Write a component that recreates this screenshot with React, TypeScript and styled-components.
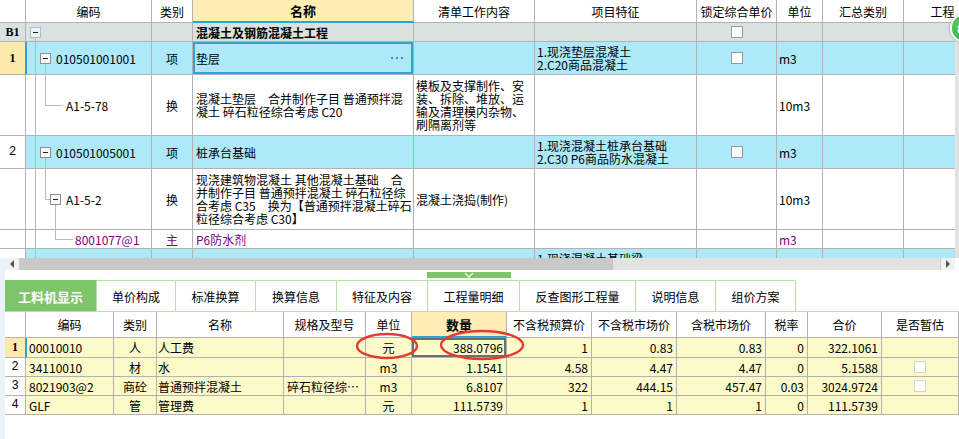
import React from "react";
import styled, { createGlobalStyle } from "styled-components";

const GlobalStyle = createGlobalStyle`
  html, body, #root { margin: 0; padding: 0; }
  body {
    width: 959px;
    height: 439px;
    overflow: hidden;
    background: #fff;
    font-family: "Noto Sans CJK SC", "Liberation Sans", sans-serif;
    font-size: 12px;
    color: #000;
  }
  * { box-sizing: border-box; }
`;

const LINE = "#b2b2b2";
const BLUE_ROW = "#aee9f9";
const GRAY_ROW = "#d9e2de";
const HEAD_YELLOW = "#feeeb5";
const NUM_YELLOW = "#fce9ab";
const PALE_YELLOW = "#fbfac8";
const GREEN = "#7ec46b";
const LIGHT_GREEN = "#b8e1a6";
const PURPLE = "#800080";
const SEL_BLUE = "#34a0d6";

const TOP_COLS = "26px 126px 41px 221px 121px 162px 80px 46px 81px 90px";
const BOT_COLS = "21px 88px 43px 127px 82px 46px 95px 85px 85px 89px 42px 74px 77px";

type Tree = { lines: number[][]; boxes?: { x: number; y: number; light?: boolean }[] };

type TopRow = {
  h: number;
  bg: string;
  num?: string;
  numBg?: string;
  numBold?: boolean;
  active?: boolean;
  code?: string;
  codeX: number;
  tree: Tree;
  kind?: string;
  name?: string;
  nameBold?: boolean;
  nameSel?: boolean;
  work?: string;
  feature?: string;
  check?: boolean;
  unit?: string;
  color?: string;
};

const TOP_ROWS: TopRow[] = [
  {
    h: 19, bg: GRAY_ROW, num: "B1", numBg: GRAY_ROW, numBold: true, codeX: 0,
    tree: { lines: [[9, 14, 9, 19]], boxes: [{ x: 4, y: 4, light: true }] },
    name: "混凝土及钢筋混凝土工程", nameBold: true, check: true,
  },
  {
    h: 33, bg: BLUE_ROW, num: "1", numBg: NUM_YELLOW, numBold: true, active: true,
    code: "010501001001", codeX: 30,
    tree: { lines: [[9, 0, 9, 33], [19, 21, 19, 33]], boxes: [{ x: 14, y: 11 }] },
    kind: "项", name: "垫层", nameSel: true,
    feature: "1.现浇垫层混凝土\n2.C20商品混凝土", check: true, unit: "m3",
  },
  {
    h: 61, bg: "#fff", code: "A1-5-78", codeX: 40,
    tree: { lines: [[9, 0, 9, 61], [19, 0, 19, 30], [19, 30, 37, 30]] },
    kind: "换", name: "混凝土垫层　合并制作子目 普通预拌混\n凝土 碎石粒径综合考虑 C20",
    work: "模板及支撑制作、安\n装、拆除、堆放、运\n输及清理模内杂物、\n刷隔离剂等", unit: "10m3",
  },
  {
    h: 33, bg: BLUE_ROW, num: "2", numBg: "#fff", code: "010501005001", codeX: 30,
    tree: { lines: [[9, 0, 9, 33], [19, 21, 19, 33]], boxes: [{ x: 14, y: 11 }] },
    kind: "项", name: "桩承台基础",
    feature: "1.现浇混凝土桩承台基础\n2.C30 P6商品防水混凝土", check: true, unit: "m3",
  },
  {
    h: 61, bg: "#fff", code: "A1-5-2", codeX: 40,
    tree: {
      lines: [[9, 0, 9, 61], [19, 0, 19, 30], [19, 30, 24, 30], [29, 35, 29, 61]],
      boxes: [{ x: 24, y: 25 }],
    },
    kind: "换",
    name: "现浇建筑物混凝土 其他混凝土基础　合\n并制作子目 普通预拌混凝土 碎石粒径综\n合考虑 C35　换为【普通预拌混凝土碎石\n粒径综合考虑 C30】",
    work: "混凝土浇捣(制作)", unit: "10m3",
  },
  {
    h: 19, bg: "#fff", code: "8001077@1", codeX: 49, color: PURPLE,
    tree: { lines: [[9, 0, 9, 19], [29, 0, 29, 9], [29, 9, 47, 9]] },
    kind: "主", name: "P6防水剂", unit: "m3",
  },
  {
    h: 33, bg: BLUE_ROW, numBg: "#fff", codeX: 30,
    tree: { lines: [[9, 0, 9, 33]] },
    feature: "1.现浇混凝土基础梁\n2.C30商品混凝土",
  },
];

const TOP_HEAD = ["", "编码", "类别", "名称", "清单工作内容", "项目特征", "锁定综合单价", "单位", "汇总类别", "工程量"];

const BOT_HEAD = ["", "编码", "类别", "名称", "规格及型号", "单位", "数量", "不含税预算价", "不含税市场价", "含税市场价", "税率", "合价", "是否暂估"];

const BOT_ROWS = [
  { n: "1", h: 20, code: "00010010", kind: "人", name: "人工费", spec: "", unit: "元", qty: "388.0796", a: "1", b: "0.83", c: "0.83", r: "0", total: "322.1061", chk: false, active: true },
  { n: "2", h: 19, code: "34110010", kind: "材", name: "水", spec: "", unit: "m3", qty: "1.1541", a: "4.58", b: "4.47", c: "4.47", r: "0", total: "5.1588", chk: true },
  { n: "3", h: 19, code: "8021903@2", kind: "商砼", name: "普通预拌混凝土", spec: "碎石粒径综…", unit: "m3", qty: "6.8107", a: "322", b: "444.15", c: "457.47", r: "0.03", total: "3024.9724", chk: true },
  { n: "4", h: 19, code: "GLF", kind: "管", name: "管理费", spec: "", unit: "元", qty: "111.5739", a: "1", b: "1", c: "1", r: "0", total: "111.5739", chk: false },
];

const TABS = [
  { label: "工料机显示", w: 92 },
  { label: "单价构成", w: 79 },
  { label: "标准换算", w: 80 },
  { label: "换算信息", w: 81 },
  { label: "特征及内容", w: 91 },
  { label: "工程量明细", w: 92 },
  { label: "反查图形工程量", w: 116 },
  { label: "说明信息", w: 80 },
  { label: "组价方案", w: 80 },
];

const TreeSvg = ({ tree, h }: { tree: Tree; h: number }) => (
  <TreeLayer width={126} height={h} shapeRendering="crispEdges">
    {tree.lines.map(([x1, y1, x2, y2], i) =>
      x1 === x2 ? (
        <line key={i} x1={x1 + 0.5} y1={y1} x2={x2 + 0.5} y2={y2} stroke="#b9b9b9" />
      ) : (
        <line key={i} x1={x1} y1={y1 + 0.5} x2={x2} y2={y2 + 0.5} stroke="#b9b9b9" />
      )
    )}
    {tree.boxes?.map((b, i) => (
      <g key={"b" + i}>
        <rect
          x={b.x + 0.5}
          y={b.y + 0.5}
          width={10}
          height={10}
          fill={b.light ? "#e9f3f6" : "#fafafa"}
          stroke={b.light ? "#9fc2d2" : "#8c8c8c"}
        />
        <line x1={b.x + 3} y1={b.y + 5.5} x2={b.x + 8} y2={b.y + 5.5} stroke="#222" />
      </g>
    ))}
  </TreeLayer>
);

const MoreDots = () => (
  <More width={12} height={3}>
    <rect x={0} y={0} width={2} height={2} fill="#3a8fd0" />
    <rect x={5} y={0} width={2} height={2} fill="#3a8fd0" />
    <rect x={10} y={0} width={2} height={2} fill="#3a8fd0" />
  </More>
);

export default function App() {
  return (
    <Page>
      <GlobalStyle />
      <TopArea>
        <GridBox>
          <GridRow $cols={TOP_COLS} $h={23} $bg="#fff">
            {TOP_HEAD.map((t, i) => (
              <HeadCell key={i} $active={i === 3}>
                {t}
              </HeadCell>
            ))}
          </GridRow>
          {TOP_ROWS.map((r, i) => (
            <GridRow key={i} $cols={TOP_COLS} $h={r.h} $bg={r.bg}>
              <NumCell $bg={r.numBg} $bold={r.numBold} $active={r.active}>
                {r.num}
              </NumCell>
              <CodeCell $pl={r.codeX} $active={r.active} $color={r.color}>
                <TreeSvg tree={r.tree} h={r.h} />
                {r.code}
              </CodeCell>
              <Cell $align="center" $color={r.color}>{r.kind}</Cell>
              <Cell $sel={r.nameSel} $bold={r.nameBold} $color={r.color} $pl={3}>
                <span>{r.name}</span>
                {r.nameSel && <MoreDots />}
              </Cell>
              <Cell>{r.work}</Cell>
              <Cell>{r.feature}</Cell>
              <Cell $align="center">{r.check && <Check />}</Cell>
              <Cell $color={r.color}>{r.unit}</Cell>
              <Cell />
              <Cell />
            </GridRow>
          ))}
        </GridBox>
        <VBar />
      </TopArea>

      <Lower>
        <LeftStrip />
        <LowerMain>
          <HScroll>
            <ScrollBtn>
              <svg width="6" height="8"><path d="M5 0 L1 4 L5 8 Z" fill="#555" /></svg>
            </ScrollBtn>
            <Thumb />
            <Track />
            <ScrollBtn $right>
              <svg width="6" height="8"><path d="M1 0 L5 4 L1 8 Z" fill="#555" /></svg>
            </ScrollBtn>
            <Corner />
          </HScroll>

          <Splitter>
            <SplitBar>
              <svg width="10" height="6">
                <path d="M1 1 L5 5 L9 1" stroke="#eaf6e4" strokeWidth="1.5" fill="none" />
              </svg>
            </SplitBar>
          </Splitter>

          <TabBar>
            {TABS.map((t, i) => (
              <Tab key={t.label} $w={t.w} $active={i === 0}>
                {t.label}
              </Tab>
            ))}
          </TabBar>

          <GridRow $cols={BOT_COLS} $h={26} $bg="#fff">
            {BOT_HEAD.map((t, i) => (
              <HeadCell key={i} $active={i === 6}>
                {t}
              </HeadCell>
            ))}
          </GridRow>
          {BOT_ROWS.map((r) => (
            <GridRow key={r.n} $cols={BOT_COLS} $h={r.h} $bg={PALE_YELLOW}>
              <NumCell $bg={r.active ? NUM_YELLOW : "#fff"} $bold={r.active} $active={r.active}>
                {r.n}
              </NumCell>
              <Cell $pl={3} $edge={r.active}>{r.code}</Cell>
              <Cell $align="center">{r.kind}</Cell>
              <Cell $pl={1}>{r.name}</Cell>
              <Cell $pl={3}>{r.spec}</Cell>
              <Cell $align="center">{r.unit}</Cell>
              <Cell $align="right" $frame={r.active}>{r.qty}</Cell>
              <Cell $align="right">{r.a}</Cell>
              <Cell $align="right">{r.b}</Cell>
              <Cell $align="right">{r.c}</Cell>
              <Cell $align="right">{r.r}</Cell>
              <Cell $align="right">{r.total}</Cell>
              <Cell $align="center">{r.chk && <Check $soft />}</Cell>
            </GridRow>
          ))}
        </LowerMain>
      </Lower>

      <Marks width={959} height={439}>
        <ellipse cx={387} cy={346} rx={30} ry={12} fill="none" stroke="#e53a30" strokeWidth={2.4} />
        <ellipse cx={482} cy={345} rx={41} ry={14} fill="none" stroke="#e53a30" strokeWidth={2.4} />
      </Marks>
      <FloatBall>8</FloatBall>
    </Page>
  );
}

const Page = styled.div`
  position: relative;
  width: 959px;
  height: 439px;
  overflow: hidden;
  display: flex;
  flex-direction: column;
`;

const TopArea = styled.div`
  display: flex;
  height: 258px;
  overflow: hidden;
`;

const GridBox = styled.div`
  width: 955px;
  overflow: hidden;
`;

const VBar = styled.div`
  width: 4px;
  margin-top: 23px;
  background: #e2e2e2;
`;

const GridRow = styled.div<{ $cols: string; $h: number; $bg: string }>`
  display: grid;
  grid-template-columns: ${(p) => p.$cols};
  height: ${(p) => p.$h}px;
  flex-shrink: 0;
  background: ${(p) => p.$bg};
`;

const Cell = styled.div<{
  $align?: "center" | "right";
  $color?: string;
  $bold?: boolean;
  $sel?: boolean;
  $pl?: number;
  $frame?: boolean;
  $edge?: boolean;
}>`
  position: relative;
  display: flex;
  align-items: center;
  justify-content: ${(p) =>
    p.$sel ? "space-between" : p.$align === "center" ? "center" : p.$align === "right" ? "flex-end" : "flex-start"};
  padding: 0 ${(p) => (p.$align === "right" ? 3 : 2)}px 0 ${(p) => p.$pl ?? 2}px;
  border-right: 1px solid ${LINE};
  border-bottom: 1px solid ${LINE};
  color: ${(p) => p.$color ?? "#000"};
  font-weight: ${(p) => (p.$bold ? 700 : 400)};
  white-space: pre;
  line-height: 13px;
  overflow: hidden;
  box-shadow: ${(p) =>
    p.$sel
      ? `inset 0 0 0 2px ${SEL_BLUE}`
      : p.$frame
      ? "inset 0 0 0 2px #6e6e6e"
      : p.$edge
      ? `inset 1px 0 0 ${SEL_BLUE}`
      : "none"};
`;

const HeadCell = styled.div<{ $active?: boolean }>`
  display: flex;
  align-items: center;
  justify-content: center;
  white-space: nowrap;
  overflow: hidden;
  border-right: 1px solid ${LINE};
  border-bottom: ${(p) => (p.$active ? `2px solid ${SEL_BLUE}` : `1px solid ${LINE}`)};
  background: ${(p) => (p.$active ? HEAD_YELLOW : "#fff")};
  font-weight: ${(p) => (p.$active ? 700 : 400)};
  font-size: ${(p) => (p.$active ? 13 : 12)}px;
`;

const NumCell = styled.div<{ $bg?: string; $bold?: boolean; $active?: boolean }>`
  display: flex;
  align-items: center;
  justify-content: center;
  background: ${(p) => p.$bg ?? "#fff"};
  border-right: 1px solid ${(p) => (p.$active ? SEL_BLUE : LINE)};
  border-bottom: 1px solid ${LINE};
  font-family: ${(p) => (p.$bold ? '"Liberation Serif", serif' : '"Liberation Mono", monospace')};
  font-weight: ${(p) => (p.$bold ? 700 : 400)};
  font-size: 12px;
`;

const CodeCell = styled.div<{ $pl: number; $active?: boolean; $color?: string }>`
  position: relative;
  display: flex;
  align-items: center;
  padding-left: ${(p) => p.$pl}px;
  border-right: 1px solid ${LINE};
  border-bottom: 1px solid ${LINE};
  color: ${(p) => p.$color ?? "#000"};
  white-space: pre;
  box-shadow: ${(p) => (p.$active ? `inset 1px 0 0 ${SEL_BLUE}` : "none")};
`;

const TreeLayer = styled.svg`
  position: absolute;
  left: 0;
  top: 0;
  pointer-events: none;
`;

const More = styled.svg`
  margin-right: 8px;
  flex-shrink: 0;
`;

const Check = styled.span<{ $soft?: boolean }>`
  display: block;
  width: 12px;
  height: 12px;
  background: #fff;
  border: 1px solid ${(p) => (p.$soft ? "#d2d2d2" : "#9a9a9a")};
`;

const Lower = styled.div`
  flex: 1;
  display: flex;
`;

const LeftStrip = styled.div`
  width: 5px;
  background: #eaf2fa;
`;

const LowerMain = styled.div`
  flex: 1;
  display: flex;
  flex-direction: column;
`;

const HScroll = styled.div`
  display: flex;
  height: 12px;
  background: #e3e3e3;
`;

const ScrollBtn = styled.div<{ $right?: boolean }>`
  width: ${(p) => (p.$right ? 15 : 14)}px;
  display: flex;
  align-items: center;
  justify-content: center;
  background: #f1f1f1;
  border-left: ${(p) => (p.$right ? "1px solid #d0d0d0" : "none")};
`;

const Thumb = styled.div`
  width: 594px;
  background: #c9c9c9;
`;

const Track = styled.div`
  flex: 1;
`;

const Corner = styled.div`
  width: 4px;
  background: #fff;
`;

const Splitter = styled.div`
  height: 10px;
  display: flex;
  align-items: center;
`;

const SplitBar = styled.div`
  margin-left: 422px;
  width: 84px;
  height: 6px;
  background: ${GREEN};
  display: flex;
  align-items: center;
  justify-content: center;
`;

const TabBar = styled.div`
  display: flex;
  height: 32px;
  border-bottom: 1px solid ${LIGHT_GREEN};
`;

const Tab = styled.div<{ $w: number; $active?: boolean }>`
  width: ${(p) => p.$w}px;
  display: flex;
  align-items: center;
  justify-content: center;
  background: ${(p) => (p.$active ? GREEN : "#fff")};
  color: ${(p) => (p.$active ? "#fff" : "#000")};
  font-weight: ${(p) => (p.$active ? 700 : 400)};
  font-size: ${(p) => (p.$active ? 13 : 12)}px;
  border-top: 1px solid ${(p) => (p.$active ? GREEN : LIGHT_GREEN)};
  border-right: 1px solid ${LIGHT_GREEN};
`;

const Marks = styled.svg`
  position: absolute;
  left: 0;
  top: 0;
  pointer-events: none;
`;

const FloatBall = styled.div`
  position: absolute;
  left: 950px;
  top: 13px;
  width: 30px;
  height: 30px;
  border-radius: 50%;
  background: radial-gradient(circle at 40% 40%, #5fd36a, #2ea43c);
  border: 2px solid #f4f4f4;
  box-shadow: 0 0 3px rgba(0, 0, 0, 0.35);
  color: #fff;
  font-weight: 700;
  font-size: 11px;
  display: flex;
  align-items: center;
  padding-left: 5px;
`;
